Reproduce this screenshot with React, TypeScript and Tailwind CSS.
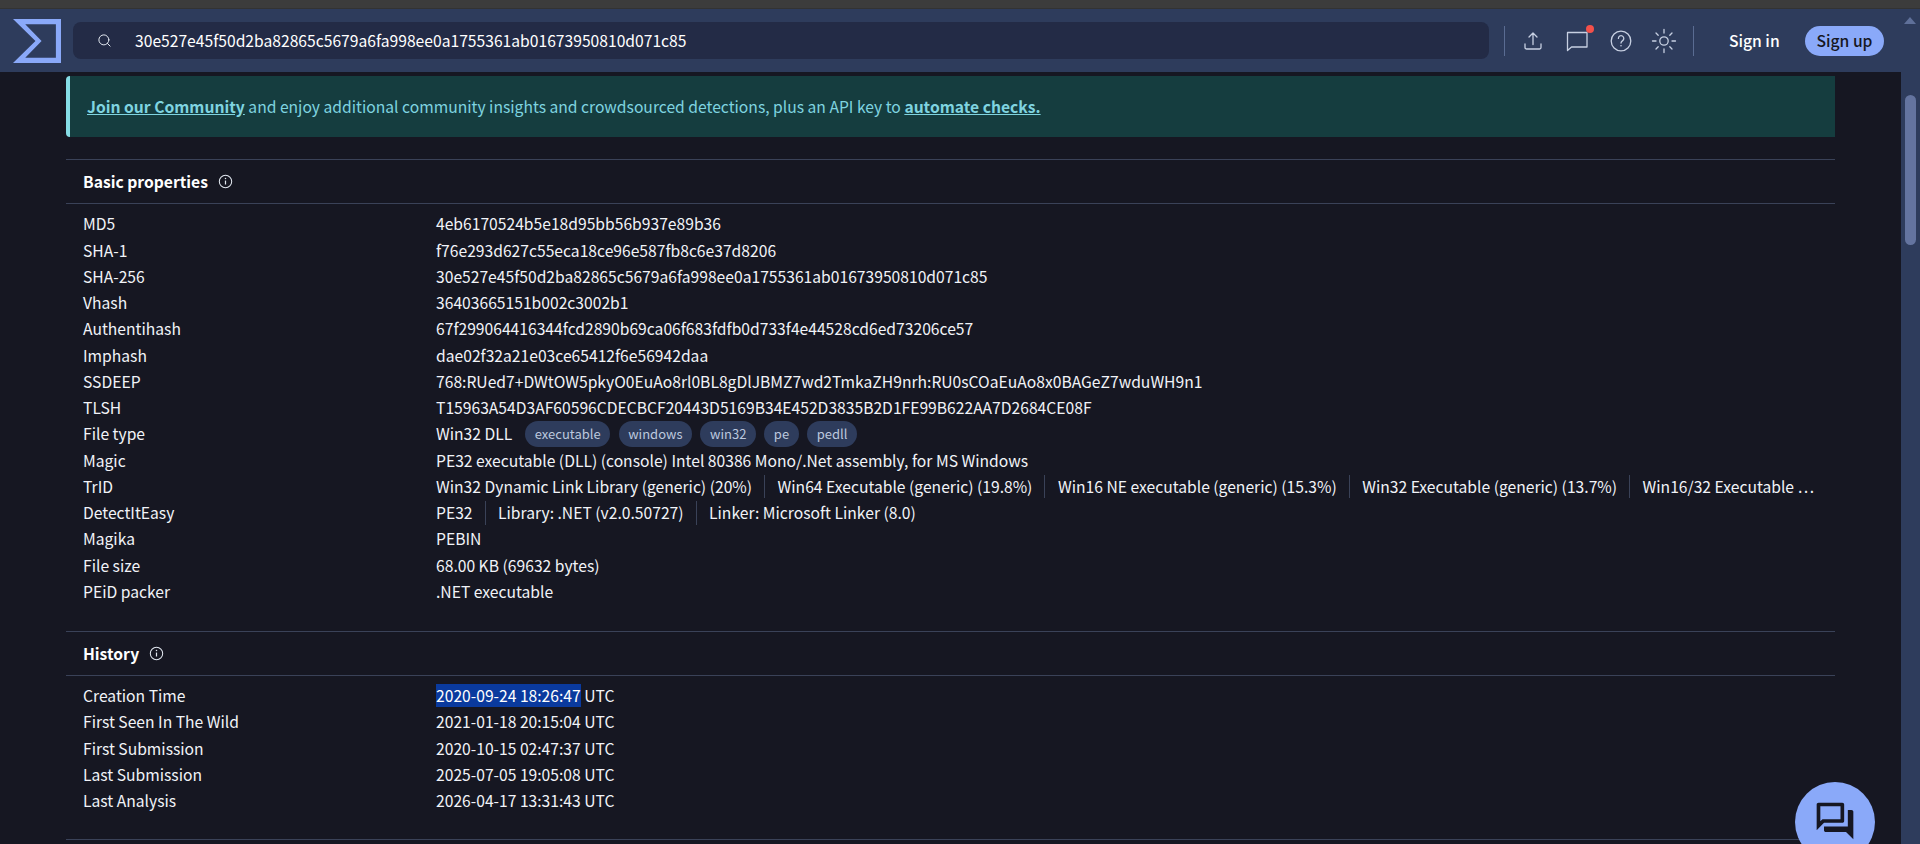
import { Search } from 'lucide-react';

const font = { fontFamily: '"Noto Sans CJK JP", "Noto Sans", sans-serif' };

const basic: { label: string; value?: string; tags?: string[]; parts?: string[] }[] = [
  { label: 'MD5', value: '4eb6170524b5e18d95bb56b937e89b36' },
  { label: 'SHA-1', value: 'f76e293d627c55eca18ce96e587fb8c6e37d8206' },
  { label: 'SHA-256', value: '30e527e45f50d2ba82865c5679a6fa998ee0a1755361ab01673950810d071c85' },
  { label: 'Vhash', value: '36403665151b002c3002b1' },
  { label: 'Authentihash', value: '67f299064416344fcd2890b69ca06f683fdfb0d733f4e44528cd6ed73206ce57' },
  { label: 'Imphash', value: 'dae02f32a21e03ce65412f6e56942daa' },
  { label: 'SSDEEP', value: '768:RUed7+DWtOW5pkyO0EuAo8rl0BL8gDlJBMZ7wd2TmkaZH9nrh:RU0sCOaEuAo8x0BAGeZ7wduWH9n1' },
  { label: 'TLSH', value: 'T15963A54D3AF60596CDECBCF20443D5169B34E452D3835B2D1FE99B622AA7D2684CE08F' },
  { label: 'File type', value: 'Win32 DLL', tags: ['executable', 'windows', 'win32', 'pe', 'pedll'] },
  { label: 'Magic', value: 'PE32 executable (DLL) (console) Intel 80386 Mono/.Net assembly, for MS Windows' },
  {
    label: 'TrID',
    parts: [
      'Win32 Dynamic Link Library (generic) (20%)',
      'Win64 Executable (generic) (19.8%)',
      'Win16 NE executable (generic) (15.3%)',
      'Win32 Executable (generic) (13.7%)',
      'Win16/32 Executable …',
    ],
  },
  { label: 'DetectItEasy', parts: ['PE32', 'Library: .NET (v2.0.50727)', 'Linker: Microsoft Linker (8.0)'] },
  { label: 'Magika', value: 'PEBIN' },
  { label: 'File size', value: '68.00 KB (69632 bytes)' },
  { label: 'PEiD packer', value: '.NET executable' },
];

const history = [
  { label: 'First Seen In The Wild', value: '2021-01-18 20:15:04 UTC' },
  { label: 'First Submission', value: '2020-10-15 02:47:37 UTC' },
  { label: 'Last Submission', value: '2025-07-05 19:05:08 UTC' },
  { label: 'Last Analysis', value: '2026-04-17 13:31:43 UTC' },
];

function InfoIcon() {
  return (
    <svg width="15" height="15" viewBox="0 0 16 16" fill="none" stroke="#e2e8f0" strokeWidth="1.1">
      <circle cx="8" cy="8" r="6.6" />
      <path d="M8 7v4.2" strokeWidth="1.3" />
      <circle cx="8" cy="4.9" r="0.8" fill="#e2e8f0" stroke="none" />
    </svg>
  );
}

function Logo() {
  return (
    <svg width="48" height="44" viewBox="13 19 47 43" className="shrink-0">
      <path fillRule="evenodd" fill="#8aa9f9" d="M13 19H60V62H13L35 40.5ZM25 24L41 40.5 25 57H55V24Z" />
    </svg>
  );
}

function SectionTitle({ title }: { title: string }) {
  return (
    <div className="flex h-[45px] items-center gap-[10px] border-y border-[#3a4258] pl-[17px] text-[15.66px] font-bold text-white">
      {title}
      <InfoIcon />
    </div>
  );
}

function Row({ label, children }: { label: string; children: React.ReactNode }) {
  return (
    <div className="flex h-[26.25px] items-center whitespace-nowrap pl-[17px]">
      <div className="w-[353px] shrink-0">{label}</div>
      <div className="flex min-w-0 flex-1 items-center pr-[17px]">{children}</div>
    </div>
  );
}

export default function App() {
  return (
    <div style={font} className="h-[844px] overflow-hidden bg-[#161722] text-[15.66px] text-[#f1f3f8]">
      <div className="h-[9px] border-b border-[#333333] bg-[#3c3c3c]" />
      <div className="flex h-[835px]">
        <div className="relative flex min-w-0 flex-1 flex-col">
          <header className="flex h-[63px] shrink-0 items-center bg-[#2e3c5c] pl-[13px]">
            <Logo />
            <div className="ml-[12px] flex h-[37px] w-[1416px] items-center rounded-lg bg-[#232b46] pl-[24px]">
              <Search size={15} color="#e2e8f0" strokeWidth={1.6} className="shrink-0" />
              <span className="ml-[23px] text-white">30e527e45f50d2ba82865c5679a6fa998ee0a1755361ab01673950810d071c85</span>
            </div>
            <div className="ml-[15px] h-[30px] w-px bg-[#5a6c92]" />
            <div className="ml-[16px] flex items-center gap-[20px]">
              <svg width="24" height="24" viewBox="0 0 24 24" fill="none" stroke="#c7d0e2" strokeWidth="1.3" strokeLinecap="round" strokeLinejoin="round">
                <path d="M12 15.5V4.5M8 8l4-4 4 4M4 15v3.6c0 .8.6 1.4 1.4 1.4h13.2c.8 0 1.4-.6 1.4-1.4V15" />
              </svg>
              <div className="relative">
                <svg width="24" height="24" viewBox="0 0 24 24" fill="none" stroke="#c7d0e2" strokeWidth="1.3" strokeLinejoin="round">
                  <path d="M2.5 3.5h19.5V18H6.5l-4 3.5Z" />
                </svg>
                <div className="absolute -right-[5px] -top-[4px] h-[8px] w-[8px] rounded-full bg-[#f4504a]" />
              </div>
              <svg width="24" height="24" viewBox="0 0 24 24" fill="none" stroke="#c7d0e2" strokeWidth="1.3" strokeLinecap="round">
                <circle cx="12" cy="12" r="9.8" />
                <path d="M9.4 9.4a2.7 2.7 0 1 1 4.2 2.2c-1 .7-1.6 1.2-1.6 2.4" />
                <circle cx="12" cy="16.8" r="0.8" fill="#c7d0e2" stroke="none" />
              </svg>
              <svg width="26" height="26" viewBox="0 0 26 26" fill="none" stroke="#c7d0e2" strokeWidth="1.3" strokeLinecap="round" className="-ml-[2px]">
                <circle cx="13" cy="13" r="4.2" />
                <path d="M13 1.5v3.5M13 21v3.5M1.5 13h3.5M21 13h3.5M5 5l2.2 2.2M18.8 18.8 21 21M5 21l2.2-2.2M18.8 7.2 21 5" />
              </svg>
            </div>
            <div className="ml-[16px] h-[30px] w-px bg-[#5a6c92]" />
            <span className="ml-[35px] w-[50px] whitespace-nowrap font-medium text-white">Sign in</span>
            <button className="ml-[26px] h-[30px] w-[79px] rounded-full bg-[#8aa9f9] text-[15.66px] font-medium text-[#161722]">Sign up</button>
          </header>

          <main className="min-h-0 flex-1 px-[66px] pt-[4px]">
            <div className="flex h-[61px] items-center rounded-l border-l-4 border-[#86dde6] bg-[#153d3f] pl-[17px] text-[#7fd4e0]">
              <span>
                <a className="font-bold underline">Join our Community</a> and enjoy additional community insights and crowdsourced detections, plus an API key to{' '}
                <a className="font-bold underline">automate checks.</a>
              </span>
            </div>

            <div className="mt-[22px]">
              <SectionTitle title="Basic properties" />
              <div className="pt-[7px]">
                {basic.map((row) => (
                  <Row key={row.label} label={row.label}>
                    {row.value && <span>{row.value}</span>}
                    {row.tags && (
                      <div className="ml-[13px] flex gap-[8.5px]">
                        {row.tags.map((tag) => (
                          <span key={tag} className="flex h-[26px] items-center rounded-full bg-[#2e3c5c] px-[9.5px] text-[13px] text-[#bcc8de]">{tag}</span>
                        ))}
                      </div>
                    )}
                    {row.parts?.map((part, i) => (
                      <span
                        key={part}
                        className={i === row.parts!.length - 1 ? 'shrink-0' : 'mr-[12.5px] shrink-0 border-r border-[#3a4258] pr-[12px]'}
                      >
                        {part}
                      </span>
                    ))}
                  </Row>
                ))}
              </div>
            </div>

            <div className="mt-[26px]">
              <SectionTitle title="History" />
              <div className="pt-[7px]">
                <Row label="Creation Time">
                  <span>
                    <span className="bg-[#0a3a9e] text-white">2020-09-24 18:26:47</span> UTC
                  </span>
                </Row>
                {history.map((row) => (
                  <Row key={row.label} label={row.label}>
                    <span>{row.value}</span>
                  </Row>
                ))}
              </div>
              <div className="mt-[25px] border-t border-[#3a4258]" />
            </div>
          </main>

          <button className="absolute left-[1795px] top-[773px] flex h-[80px] w-[80px] items-start justify-center rounded-full bg-[#8aa9f9] pt-[17px]">
            <svg width="44" height="44" viewBox="0 0 24 24" fill="#161722">
              <path d="M15 4v7H5.17L4 12.17V4h11m1-2H3c-.55 0-1 .45-1 1v14l4-4h10c.55 0 1-.45 1-1V3c0-.55-.45-1-1-1zm5 4h-2v9H6v2c0 .55.45 1 1 1h11l4 4V7c0-.55-.45-1-1-1z" />
            </svg>
          </button>
        </div>

        <div className="relative w-[19px] shrink-0 bg-[#2e3c5c]">
          <div className="absolute left-[3px] top-[8px] h-0 w-0 border-x-[6.5px] border-b-[7px] border-x-transparent border-b-[#5f7099]" />
          <div className="absolute left-[4px] top-[86px] h-[150px] w-[11px] rounded-full bg-[#64749f]" />
        </div>
      </div>
    </div>
  );
}
